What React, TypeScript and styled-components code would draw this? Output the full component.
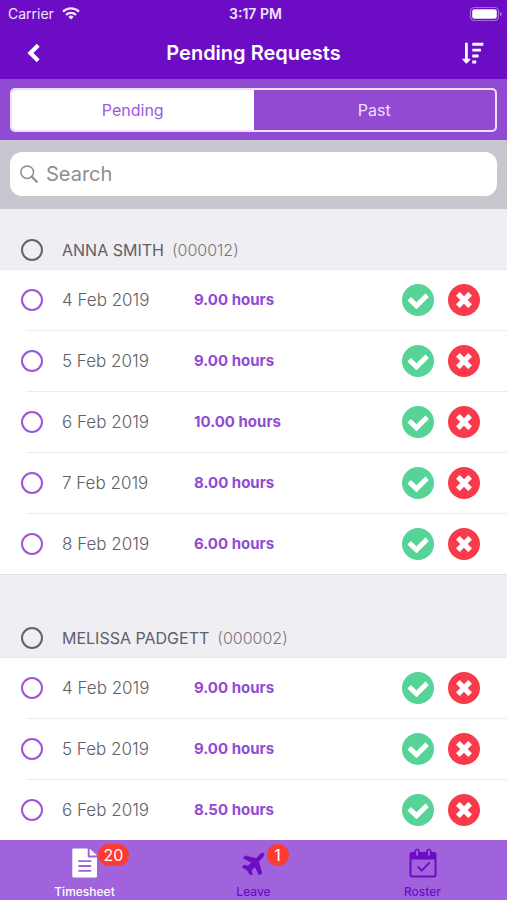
import React from "react";
import styled, { createGlobalStyle, css } from "styled-components";

const GlobalStyle = createGlobalStyle`
  *, *::before, *::after { box-sizing: border-box; }
  body {
    margin: 0;
    font-family: Inter, "Liberation Sans", sans-serif;
    background: #efeef3;
  }
  button, input { font: inherit; }
`;

const Screen = styled.div`
  display: flex;
  flex-direction: column;
  height: 100vh;
  overflow: hidden;
`;

const Header = styled.header`
  flex: none;
  color: #fff;
  background: #6d0cc5;
`;

const StatusBar = styled.div`
  display: grid;
  grid-template-columns: 1fr auto 1fr;
  align-items: center;
  height: 27px;
  padding: 0 4px 0 8px;
  font-size: 14px;
  line-height: 16px;
  color: #f1e4fb;
`;

const Carrier = styled.div`
  display: flex;
  align-items: center;
  gap: 8px;
`;

const Clock = styled.time`
  font-weight: 600;
`;

const Battery = styled.svg`
  justify-self: end;
`;

const NavBar = styled.div`
  display: grid;
  grid-template-columns: 1fr auto 1fr;
  align-items: center;
  height: 52px;
  padding: 0 20px;
`;

const Title = styled.h1`
  margin: 0;
  font-size: 20px;
  line-height: 24px;
  font-weight: 600;
`;

const IconButton = styled.button<{ $end?: boolean }>`
  display: flex;
  align-items: center;
  justify-content: center;
  justify-self: ${(p) => (p.$end ? "end" : "start")};
  width: 28px;
  height: 32px;
  padding: 0;
  border: 0;
  background: none;
  color: inherit;
  cursor: pointer;
`;

const SegmentStrip = styled.div`
  flex: none;
  padding: 9px 10px 8px;
  background: #914bd3;
`;

const Segments = styled.div`
  display: grid;
  grid-template-columns: 1fr 1fr;
  height: 44px;
  border: 2px solid #efe0fb;
  border-radius: 5px;
  overflow: hidden;
  background: #914bd3;
`;

const Segment = styled.button<{ $active?: boolean }>`
  border: 0;
  padding: 0;
  font-size: 16px;
  color: ${(p) => (p.$active ? "#9a5cd9" : "#eedffa")};
  background: ${(p) => (p.$active ? "#fff" : "transparent")};
  cursor: pointer;
`;

const SearchStrip = styled.div`
  flex: none;
  padding: 12px 10px 13px;
  background: #c8c6ce;
`;

const SearchField = styled.label`
  display: flex;
  align-items: center;
  gap: 8px;
  height: 44px;
  padding: 0 10px;
  border-radius: 12px;
  background: #fff;
`;

const SearchInput = styled.input`
  flex: 1;
  min-width: 0;
  padding: 0;
  border: 0;
  outline: 0;
  background: none;
  font-size: 20px;
  line-height: 24px;
  color: #444;
  &::placeholder { color: #8e8e93; opacity: 1; }
`;

const Content = styled.main`
  flex: 1;
  min-height: 0;
  overflow-y: auto;
  scrollbar-width: none;
`;

const Group = styled.section`
  & + & { padding-top: 22px; }
`;

const GroupHeader = styled.label`
  display: flex;
  align-items: center;
  height: 61px;
  padding: 22px 20px 0 21px;
  border-bottom: 1px solid #e8e7ec;
  color: #606066;
`;

const GroupName = styled.h2`
  margin: 0 8px 0 19px;
  font-size: 16px;
  line-height: 20px;
  font-weight: 400;
`;

const GroupCode = styled.span`
  font-size: 16px;
  line-height: 20px;
  font-weight: 300;
  color: #77777c;
`;

const Rows = styled.ul`
  margin: 0;
  padding: 0;
  list-style: none;
  background: #fff;
  border-bottom: 1px solid #e4e3e8;
`;

const Row = styled.li`
  display: grid;
  grid-template-columns: 173px 1fr auto;
  align-items: center;
  height: 61px;
  padding: 0 27px 1px 21px;
  background: linear-gradient(#ececee, #ececee) 26px 100% / 100% 1px no-repeat;
  &:last-child {
    height: 60px;
    padding-bottom: 0;
    background: none;
  }
`;

const DateLabel = styled.label`
  display: flex;
  align-items: center;
  gap: 19px;
  font-size: 17px;
  line-height: 20px;
  font-weight: 300;
  color: #606064;
`;

const RoundCheck = styled.input<{ $dark?: boolean }>`
  appearance: none;
  flex: none;
  width: 22px;
  height: 22px;
  margin: 0;
  border: 2px solid ${(p) => (p.$dark ? "#646468" : "#9a55da")};
  border-radius: 50%;
  cursor: pointer;
  &:checked { background: ${(p) => (p.$dark ? "#646468" : "#9a55da")}; }
`;

const Hours = styled.span`
  font-size: 15px;
  line-height: 20px;
  font-weight: 700;
  color: #914bd3;
`;

const Actions = styled.div`
  display: flex;
  gap: 14px;
`;

const ActionButton = styled.button<{ $tone: "approve" | "reject" }>`
  display: flex;
  align-items: center;
  justify-content: center;
  width: 32px;
  height: 32px;
  padding: 0;
  border: 0;
  border-radius: 50%;
  color: #fff;
  background: ${(p) => (p.$tone === "approve" ? "#56d498" : "#f93a4b")};
  cursor: pointer;
`;

const TabBar = styled.nav`
  flex: none;
  display: grid;
  grid-template-columns: repeat(3, 1fr);
  height: 60px;
  background: #a063db;
`;

const Tab = styled.a<{ $active?: boolean }>`
  display: flex;
  flex-direction: column;
  align-items: center;
  padding-top: 7px;
  gap: 5px;
  font-size: 12px;
  line-height: 16px;
  font-weight: 500;
  text-decoration: none;
  color: #6d0cc5;
  ${(p) => p.$active && css`color: #fff;`}
`;

const TabIcon = styled.span`
  position: relative;
  display: flex;
  align-items: center;
  justify-content: center;
  width: 32px;
  height: 32px;
`;

const Badge = styled.span`
  position: absolute;
  top: -3px;
  left: 29px;
  min-width: 22px;
  height: 22px;
  padding: 0 6px;
  border-radius: 11px;
  background: #fe3b30;
  color: #fff;
  font-size: 16px;
  line-height: 22px;
  font-weight: 400;
  text-align: center;
`;

const WifiIcon = () => (
  <svg width="18" height="13" viewBox="0 0 18 13" fill="none" stroke="currentColor" strokeWidth="2.3" aria-hidden="true">
    <path d="M1 4.6a11.4 11.4 0 0 1 16 0" />
    <path d="M4 7.9a7.1 7.1 0 0 1 10 0" />
    <path d="M9 12.4 6.4 9.9a3.7 3.7 0 0 1 5.2 0z" fill="currentColor" stroke="none" />
  </svg>
);

const BatteryIcon = () => (
  <Battery width="34" height="16" viewBox="0 0 34 16" role="img" aria-label="Battery full">
    <rect x="1.5" y="1.5" width="28" height="13" rx="4" fill="none" stroke="#a56adb" strokeWidth="1.2" />
    <rect x="3.2" y="3.2" width="24.6" height="9.6" rx="2.4" fill="#fff" />
    <path d="M31 5.7v4.6c2.3-.9 2.3-3.7 0-4.6z" fill="#a56adb" />
  </Battery>
);

const BackIcon = () => (
  <svg width="14" height="20" viewBox="0 0 14 20" fill="none" stroke="currentColor" strokeWidth="4.2" aria-hidden="true">
    <path d="M11.2 2.2 3.4 10l7.800 7.800" strokeLinejoin="miter" />
  </svg>
);

const SortIcon = () => (
  <svg width="22" height="22" viewBox="0 0 22 22" fill="currentColor" aria-hidden="true">
    <path d="M3 .8h2.8v16h2c.6 0 .8.5.4 1l-3.200 3.400a.8.8 0 0 1-1.200 0L.6 17.800c-.4-.5-.2-1 .4-1h2z" />
    <path d="M10.300.8h11v2.900h-11zM10.300 6.700h8.600v2.900h-8.600zM10.300 12.600h6.200v2.900h-6.200zM10.300 18.500h3.900v2.900h-3.900z" />
  </svg>
);

const SearchIcon = () => (
  <svg width="18" height="18" viewBox="0 0 18 18" fill="none" stroke="#8e8e93" aria-hidden="true">
    <circle cx="7.200" cy="7.200" r="6.300" strokeWidth="1.500" />
    <path d="m11.800 11.800 5 5" strokeWidth="2.200" strokeLinecap="round" />
  </svg>
);

const CheckIcon = () => (
  <svg width="32" height="32" viewBox="0 0 32 32" fill="currentColor" aria-hidden="true">
    <path d="M24 9.900l2.400 2.500c.3.300.3.700 0 1L15.100 24.700c-.4.400-.8.400-1.200 0l-8-7.800c-.3-.3-.3-.7 0-1l2.500-2.500c.3-.3.700-.3 1 0l5.100 4.900 8.400-8.400c.4-.4.8-.4 1.100 0z" />
  </svg>
);

const CrossIcon = () => (
  <svg width="16" height="16" viewBox="0 0 16 16" fill="none" stroke="currentColor" strokeWidth="5.200" strokeLinecap="square" aria-hidden="true">
    <path d="m3.700 3.700 8.600 8.600m0-8.600-8.600 8.600" />
  </svg>
);

const TimesheetIcon = () => (
  <svg width="26" height="30" viewBox="0 0 26 30" aria-hidden="true">
    <path d="M1.500.5h14.200v7.700c0 .8.500 1.300 1.300 1.300h8v18.800c0 .7-.5 1.200-1.200 1.200H1.500C.8 29.500.3 29 .3 28.300V1.700C.3 1 .8.500 1.500.5z" fill="currentColor" />
    <path d="M17.700.800c.4.200.6.300.9.600l5.500 5c.4.400.6.700.7 1.100h-7.100z" fill="currentColor" />
    <path d="M7 13.200h11.500M7 18h11.500M7 22.800h11.500" stroke="#a063db" strokeWidth="1.800" strokeLinecap="round" />
  </svg>
);

const PlaneIcon = () => (
  <svg width="23" height="23" viewBox="0 0 24 24" fill="currentColor" stroke="currentColor" strokeWidth="0.6" aria-hidden="true">
    <path d="M22.600 1.400c.9 1-.1 3.400-1.600 4.900l-3.600 3.600 3.200 11.800c.1.300 0 .5-.2.700l-1.700 1.300c-.4.300-.9.200-1.100-.3l-4-8.100-3.800 3.800.9 3.600c.1.300 0 .5-.2.700L9.200 23.700c-.3.300-.8.200-1-.1l-2.800-4.700-4.700-2.800c-.4-.2-.5-.7-.1-1l1.300-1.300c.2-.2.400-.3.700-.2l3.600.9L10 11 1.900 6.900c-.5-.2-.6-.8-.2-1.100L3.300 4.200c.2-.2.400-.2.700-.1l10.800 2.600L18.300 3c1.500-1.500 3.500-2.500 4.300-1.600z" />
  </svg>
);

const RosterIcon = () => (
  <svg width="28" height="30" viewBox="0 0 28 30" fill="none" stroke="currentColor" aria-hidden="true">
    <path d="M1.500 11V6c0-.8.400-1.300 1.200-1.300h22.600c.8 0 1.200.5 1.200 1.300v5z" fill="currentColor" strokeWidth="1" />
    <rect x="1.500" y="5" width="25" height="23.500" rx="1.500" strokeWidth="2" />
    <rect x="6.300" y="1.500" width="3.600" height="7" rx="1.800" fill="#a063db" strokeWidth="1.600" />
    <rect x="18.100" y="1.500" width="3.600" height="7" rx="1.800" fill="#a063db" strokeWidth="1.600" />
    <path d="m8.700 18.300 4 4.300 8-8.200" strokeWidth="1.900" />
  </svg>
);

type Entry = { date: string; hours: string };
type Person = { name: string; code: string; entries: Entry[] };

const people: Person[] = [
  {
    name: "ANNA SMITH",
    code: "000012",
    entries: [
      { date: "4 Feb 2019", hours: "9.00" },
      { date: "5 Feb 2019", hours: "9.00" },
      { date: "6 Feb 2019", hours: "10.00" },
      { date: "7 Feb 2019", hours: "8.00" },
      { date: "8 Feb 2019", hours: "6.00" },
    ],
  },
  {
    name: "MELISSA PADGETT",
    code: "000002",
    entries: [
      { date: "4 Feb 2019", hours: "9.00" },
      { date: "5 Feb 2019", hours: "9.00" },
      { date: "6 Feb 2019", hours: "8.50" },
    ],
  },
];

export default function App() {
  return (
    <Screen>
      <GlobalStyle />
      <Header>
        <StatusBar>
          <Carrier>
            Carrier
            <WifiIcon />
          </Carrier>
          <Clock>3:17 PM</Clock>
          <BatteryIcon />
        </StatusBar>
        <NavBar>
          <IconButton aria-label="Back">
            <BackIcon />
          </IconButton>
          <Title>Pending Requests</Title>
          <IconButton $end aria-label="Sort">
            <SortIcon />
          </IconButton>
        </NavBar>
      </Header>
      <SegmentStrip>
        <Segments>
          <Segment $active aria-pressed="true">Pending</Segment>
          <Segment aria-pressed="false">Past</Segment>
        </Segments>
      </SegmentStrip>
      <SearchStrip>
        <SearchField>
          <SearchIcon />
          <SearchInput type="search" placeholder="Search" aria-label="Search" />
        </SearchField>
      </SearchStrip>
      <Content>
        {people.map((person) => (
          <Group key={person.code}>
            <GroupHeader>
              <RoundCheck $dark type="checkbox" />
              <GroupName>{person.name}</GroupName>
              <GroupCode>({person.code})</GroupCode>
            </GroupHeader>
            <Rows>
              {person.entries.map((entry) => (
                <Row key={entry.date}>
                  <DateLabel>
                    <RoundCheck type="checkbox" />
                    {entry.date}
                  </DateLabel>
                  <Hours>{entry.hours} hours</Hours>
                  <Actions>
                    <ActionButton $tone="approve" aria-label={`Approve ${entry.date}`}>
                      <CheckIcon />
                    </ActionButton>
                    <ActionButton $tone="reject" aria-label={`Reject ${entry.date}`}>
                      <CrossIcon />
                    </ActionButton>
                  </Actions>
                </Row>
              ))}
            </Rows>
          </Group>
        ))}
      </Content>
      <TabBar>
        <Tab href="#timesheet" $active aria-current="page">
          <TabIcon>
            <TimesheetIcon />
            <Badge>20</Badge>
          </TabIcon>
          Timesheet
        </Tab>
        <Tab href="#leave">
          <TabIcon>
            <PlaneIcon />
            <Badge>1</Badge>
          </TabIcon>
          Leave
        </Tab>
        <Tab href="#roster">
          <TabIcon>
            <RosterIcon />
          </TabIcon>
          Roster
        </Tab>
      </TabBar>
    </Screen>
  );
}
